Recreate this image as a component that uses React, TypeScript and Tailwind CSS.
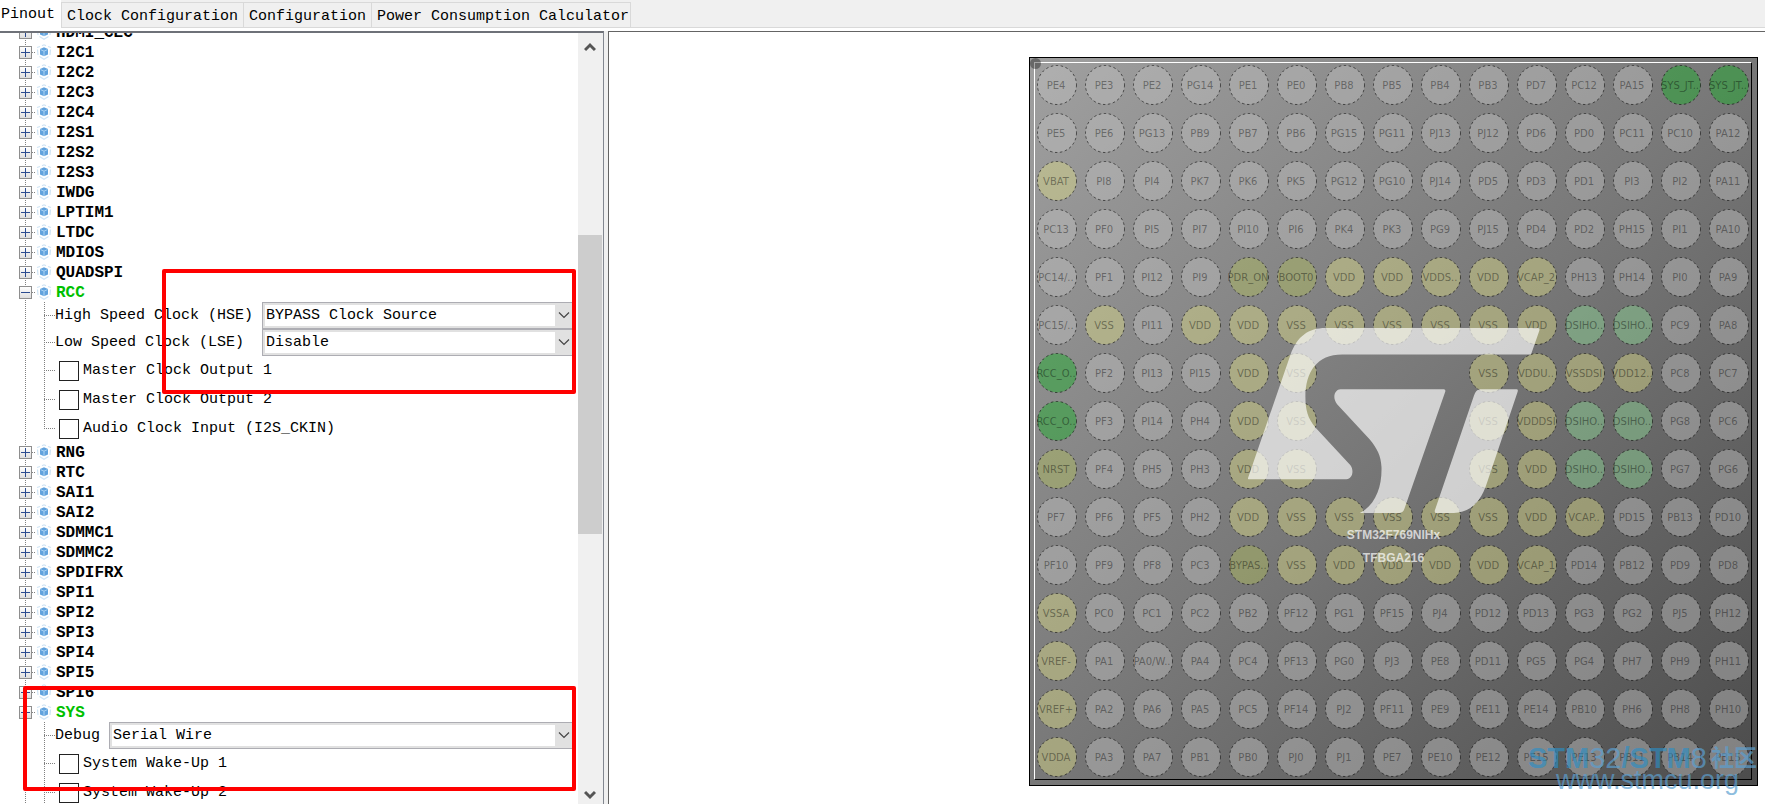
import React, { useState } from "react";
import clsx from "clsx";

const TABS = [
  "Pinout",
  "Clock Configuration",
  "Configuration",
  "Power Consumption Calculator",
];

type Option =
  | { kind: "select"; label: string; wide?: boolean; values: string[] }
  | { kind: "check"; label: string };

interface Peripheral {
  name: string;
  options?: Option[];
  more?: boolean;
}

const PERIPHERALS: Peripheral[] = [
  { name: "HDMI_CEC" },
  { name: "I2C1" },
  { name: "I2C2" },
  { name: "I2C3" },
  { name: "I2C4" },
  { name: "I2S1" },
  { name: "I2S2" },
  { name: "I2S3" },
  { name: "IWDG" },
  { name: "LPTIM1" },
  { name: "LTDC" },
  { name: "MDIOS" },
  { name: "QUADSPI" },
  {
    name: "RCC",
    options: [
      {
        kind: "select",
        label: "High Speed Clock (HSE)",
        wide: true,
        values: ["BYPASS Clock Source", "Disable"],
      },
      {
        kind: "select",
        label: "Low Speed Clock (LSE)",
        wide: true,
        values: ["Disable", "BYPASS Clock Source"],
      },
      { kind: "check", label: "Master Clock Output 1" },
      { kind: "check", label: "Master Clock Output 2" },
      { kind: "check", label: "Audio Clock Input (I2S_CKIN)" },
    ],
  },
  { name: "RNG" },
  { name: "RTC" },
  { name: "SAI1" },
  { name: "SAI2" },
  { name: "SDMMC1" },
  { name: "SDMMC2" },
  { name: "SPDIFRX" },
  { name: "SPI1" },
  { name: "SPI2" },
  { name: "SPI3" },
  { name: "SPI4" },
  { name: "SPI5" },
  { name: "SPI6" },
  {
    name: "SYS",
    more: true,
    options: [
      { kind: "select", label: "Debug", values: ["Serial Wire", "Disable"] },
      { kind: "check", label: "System Wake-Up 1" },
      { kind: "check", label: "System Wake-Up 2" },
    ],
  },
];

// One string per ball row, A to R
const BALLS = [
  "PE4 PE3 PE2 PG14 PE1 PE0 PB8 PB5 PB4 PB3 PD7 PC12 PA15 SYS_JT.. SYS_JT..",
  "PE5 PE6 PG13 PB9 PB7 PB6 PG15 PG11 PJ13 PJ12 PD6 PD0 PC11 PC10 PA12",
  "VBAT PI8 PI4 PK7 PK6 PK5 PG12 PG10 PJ14 PD5 PD3 PD1 PI3 PI2 PA11",
  "PC13 PF0 PI5 PI7 PI10 PI6 PK4 PK3 PG9 PJ15 PD4 PD2 PH15 PI1 PA10",
  "PC14/.. PF1 PI12 PI9 PDR_ON BOOT0 VDD VDD VDDS.. VDD VCAP_2 PH13 PH14 PI0 PA9",
  "PC15/.. VSS PI11 VDD VDD VSS VSS VSS VSS VSS VDD DSIHO.. DSIHO.. PC9 PA8",
  "RCC_O.. PF2 PI13 PI15 VDD VSS - - - VSS VDDU.. VSSDSI VDD12.. PC8 PC7",
  "RCC_O.. PF3 PI14 PH4 VDD VSS - - - VSS VDDDSI DSIHO.. DSIHO.. PG8 PC6",
  "NRST PF4 PH5 PH3 VDD VSS - - - VSS VDD DSIHO.. DSIHO.. PG7 PG6",
  "PF7 PF6 PF5 PH2 VDD VSS VSS VSS VSS VSS VDD VCAP.. PD15 PB13 PD10",
  "PF10 PF9 PF8 PC3 BYPAS.. VSS VDD VDD VDD VDD VCAP_1 PD14 PB12 PD9 PD8",
  "VSSA PC0 PC1 PC2 PB2 PF12 PG1 PF15 PJ4 PD12 PD13 PG3 PG2 PJ5 PH12",
  "VREF- PA1 PA0/W.. PA4 PC4 PF13 PG0 PJ3 PE8 PD11 PG5 PG4 PH7 PH9 PH11",
  "VREF+ PA2 PA6 PA5 PC5 PF14 PJ2 PF11 PE9 PE11 PE14 PB10 PH6 PH8 PH10",
  "VDDA PA3 PA7 PB1 PB0 PJ0 PJ1 PE7 PE10 PE12 PE15 PE13 PB11 PB14 PB15",
].map((row) => row.split(" "));

const ballFill = (name: string) => {
  if (/^(SYS|RCC)/.test(name)) return "fill-[#18b028]";
  if (/^DSI/.test(name)) return "fill-[#8eda96]";
  if (/^(NRST|BOOT|PDR|BYPAS)/.test(name)) return "fill-[#b2be60]";
  if (/^V/.test(name)) return "fill-[#dcdc88]";
  return "fill-[#c0c0c0]";
};

const Dots = ({ className }: { className: string }) => (
  <span
    aria-hidden="true"
    className={clsx(
      "h-px bg-[repeating-linear-gradient(90deg,#808080_0_1px,transparent_1px_2px)]",
      className
    )}
  />
);

const CubeIcon = () => (
  <svg className="h-4 w-4 shrink-0" viewBox="0 0 16 16" fill="none">
    <path
      d="M8 .8 10 1.800M12 2.500 15 3.500M14.500 5.500 14 11M12.500 12.500 8 15.300 3.500 12.500M2 11 1.500 5.500M1 3.500 4 2.500M6 1.800 8 .8"
      stroke="#cfe4f5"
      strokeWidth="1.2"
    />
    <path d="M8 3.200 12 5v5.500L8 12.300 4 10.500V5Z" fill="#62a3dd" />
    <path d="M4.500 5.600 8 7.200l3.500-1.600M8 7.200V12" stroke="#a9d2f3" />
  </svg>
);

function OptionRow({ option }: { option: Option }) {
  const id = option.label.replace(/\W+/g, "-").toLowerCase();

  if (option.kind === "select") {
    return (
      <li className="flex h-[27px] items-center">
        <Dots className="w-[11px] shrink-0" />
        <label
          htmlFor={id}
          className={clsx("shrink-0", option.wide ? "w-[207px]" : "w-[54px]")}
        >
          {option.label}
        </label>
        <div className="relative h-[27px] flex-1 border border-[#adadb3] bg-[#e1e1e1] py-0.5 pr-[18px] pl-0.5">
          <select
            id={id}
            className="block h-full w-full appearance-none bg-white pl-px outline-none"
          >
            {option.values.map((v) => (
              <option key={v}>{v}</option>
            ))}
          </select>
          <svg
            className="pointer-events-none absolute top-2 right-[3px] h-2 w-3"
            viewBox="0 0 12 8"
            fill="none"
            stroke="#444"
            strokeWidth="1.2"
          >
            <path d="M1 1.500 6 6.500 11 1.500" />
          </svg>
        </div>
      </li>
    );
  }

  return (
    <li className="flex h-[29px] items-center">
      <Dots className="mr-1 w-[11px] shrink-0" />
      <input
        id={id}
        type="checkbox"
        className="h-5 w-5 appearance-none border border-[#222] bg-white checked:bg-[#2b4b8f]"
      />
      <label htmlFor={id} className="pt-px pl-1">
        {option.label}
      </label>
    </li>
  );
}

function PeripheralNode({ item }: { item: Peripheral }) {
  const [open, setOpen] = useState(!!item.options);

  return (
    <li>
      <div className="flex h-5 items-center pl-[19px]">
        <button
          onClick={() => setOpen(!open)}
          aria-label={`Toggle ${item.name}`}
          className="relative flex h-[13px] w-[13px] items-center justify-center border border-[#8e8e8e] bg-linear-to-b from-white to-[#dedede]"
        >
          <svg className="h-[9px] w-[9px]" viewBox="0 0 9 9" stroke="#2b4b8f">
            <path d="M0 4.500H9" />
            {!open && <path d="M4.500 0V9" />}
          </svg>
        </button>
        <Dots className="w-1" />
        <CubeIcon />
        <span
          className={clsx(
            "pt-0.5 pl-1 text-base leading-5 font-bold",
            item.options ? "text-[#00c000]" : "text-black"
          )}
        >
          {item.name}
        </span>
      </div>
      {open && item.options && (
        <ul className="relative mr-1 -mb-px ml-11">
          <span
            aria-hidden="true"
            className={clsx(
              "absolute top-0 left-0 w-px bg-[repeating-linear-gradient(#808080_0_1px,transparent_1px_2px)]",
              item.more ? "bottom-0" : "bottom-3.5"
            )}
          />
          {item.options.map((option) => (
            <OptionRow key={option.label} option={option} />
          ))}
        </ul>
      )}
    </li>
  );
}

const Arrow = ({ down }: { down?: boolean }) => (
  <button
    aria-label={down ? "Scroll down" : "Scroll up"}
    className={clsx(
      "flex w-full items-center justify-center",
      down ? "h-[18px]" : "h-7"
    )}
  >
    <svg
      className="h-2.5 w-3"
      viewBox="0 0 12 10"
      fill="none"
      stroke="#555"
      strokeWidth="3"
    >
      <path d={down ? "M1 2 6 7 11 2" : "M1 8 6 3 11 8"} />
    </svg>
  </button>
);

const Ball = ({ name }: { name: string }) =>
  name === "-" ? (
    <span />
  ) : (
    <div className="relative flex h-10 w-10 items-center justify-center">
      <svg className="absolute inset-0 h-10 w-10" viewBox="0 0 40 40">
        <circle
          cx="20"
          cy="20"
          r="19.5"
          className={ballFill(name)}
          fillOpacity=".45"
          stroke="#000"
          strokeOpacity=".55"
          strokeDasharray="2.500 2.500"
        />
      </svg>
      <span className="relative pt-px pr-0.5 text-[10px] leading-3 whitespace-nowrap text-black/40">
        {name}
      </span>
    </div>
  );

const Chip = () => (
  <div className="relative h-[729px] w-[729px] shrink-0 border border-black bg-linear-to-br from-[#a0a0a0] via-[#787878] to-[#4c4c4c] p-1 font-['DejaVu_Sans',Verdana,sans-serif]">
    <span className="absolute top-0 left-0 h-[11px] w-[11px] rounded-full bg-black/35" />
    <div className="grid w-[718px] grid-cols-[repeat(15,40px)] gap-2 border border-t-white border-r-black border-b-black border-l-white p-0.5">
      {BALLS.flat().map((name, i) => (
        <Ball key={i} name={name} />
      ))}
    </div>

    {/* Brand mark and part number */}
    <div className="pointer-events-none absolute inset-x-0 top-[270px] flex flex-col items-center font-['Liberation_Sans',Arial,sans-serif] text-xs leading-[23px] font-bold text-white/70">
      <svg
        className="mb-[11px] h-[185px] w-[292px]"
        viewBox="143 84 875 554"
        fill="#fff"
        fillOpacity=".67"
      >
        <path d="M143 533 270 165C290 108 325 84 375 84H1012Q1018 84 1016 92L991 163H425C350 163 315 215 315 290C315 330 322 354 345 382L450 495C462 512 455 537 438 537H147Q142 537 143 533Z" />
        <path d="M420 267H730Q736 267 734 275L612 625Q608 638 597 638H478C525 615 545 560 543 500C541 466 530 445 508 418L410 312C393 290 405 267 420 267Z" />
        <path d="M838 267H948Q953 267 951 275L860 545Q832 636 760 638H707Q701 638 703 630L820 287Q826 267 838 267Z" />
      </svg>
      <span>STM32F769NIHx</span>
      <span>TFBGA216</span>
    </div>

    {/* Community watermark */}
    <div className="pointer-events-none absolute top-[686px] left-[498px] font-['Liberation_Sans','Noto_Sans_CJK_SC',sans-serif] whitespace-nowrap text-[#2a8fc8]/65">
      <p className="flex h-7 items-center text-[29px] leading-7">
        <b>STM</b>
        <span className="text-[#5b9fd0]/70">32</span>
        <b>/STM</b>
        <span className="text-[#5b9fd0]/70">8</span>
        <span className="pl-1 text-[23px] font-bold text-[#5b9fd0]/70">
          社区
        </span>
      </p>
      <p className="pl-7 text-[27px] leading-4 text-[#5b9fd0]/70">
        www.stmcu.org
      </p>
    </div>
  </div>
);

export default function App() {
  const [tab, setTab] = useState(TABS[0]);

  return (
    <div className="flex h-screen flex-col overflow-hidden bg-white font-['Liberation_Mono','Courier_New',monospace] text-[15px] leading-5 text-black">
      <nav className="flex h-7 shrink-0 items-end border-b border-[#d9d9d9] bg-[#f0f0f0]">
        {TABS.map((name) => (
          <button
            key={name}
            onClick={() => setTab(name)}
            className={clsx(
              "whitespace-nowrap",
              tab === name
                ? "-mb-px h-7 bg-white pt-0.5 pr-1.5 pl-px"
                : "h-[25px] border-t border-l border-[#d9d9d9] px-[5px] pt-1 last:border-r last:pr-px"
            )}
          >
            {name}
          </button>
        ))}
      </nav>

      <main className="mt-[3px] flex min-h-0 flex-1 bg-[#f0f0f0]">
        <aside className="flex w-[604px] shrink-0 border-t-2 border-r border-t-[#6e7178] border-r-[#828790] bg-white">
          <div className="relative min-w-0 flex-1 overflow-hidden">
            <ul className="relative -mt-[11px]">
              <span
                aria-hidden="true"
                className="absolute inset-y-0 left-[25px] w-px bg-[repeating-linear-gradient(#808080_0_1px,transparent_1px_2px)]"
              />
              {PERIPHERALS.map((item) => (
                <PeripheralNode key={item.name} item={item} />
              ))}
            </ul>

            {/* Highlighted settings */}
            <div className="pointer-events-none absolute top-[236px] right-0.5 left-[162px] h-[125px] rounded-xs border-4 border-[#ff0000]" />
            <div className="pointer-events-none absolute top-[653px] right-0.5 left-[23px] h-[105px] rounded-xs border-4 border-[#ff0000]" />
          </div>

          <div className="flex w-[25px] flex-col bg-[#f0f0f0] pr-px">
            <Arrow />
            <div className="flex-1 pt-[174px]">
              <div className="h-[299px] bg-[#cdcdcd]" />
            </div>
            <Arrow down />
          </div>
        </aside>

        <section className="ml-1 flex min-w-0 flex-1 justify-end overflow-hidden border-t border-l border-[#646464] bg-white pt-[25px] pr-[7px]">
          <Chip />
        </section>
      </main>
    </div>
  );
}
